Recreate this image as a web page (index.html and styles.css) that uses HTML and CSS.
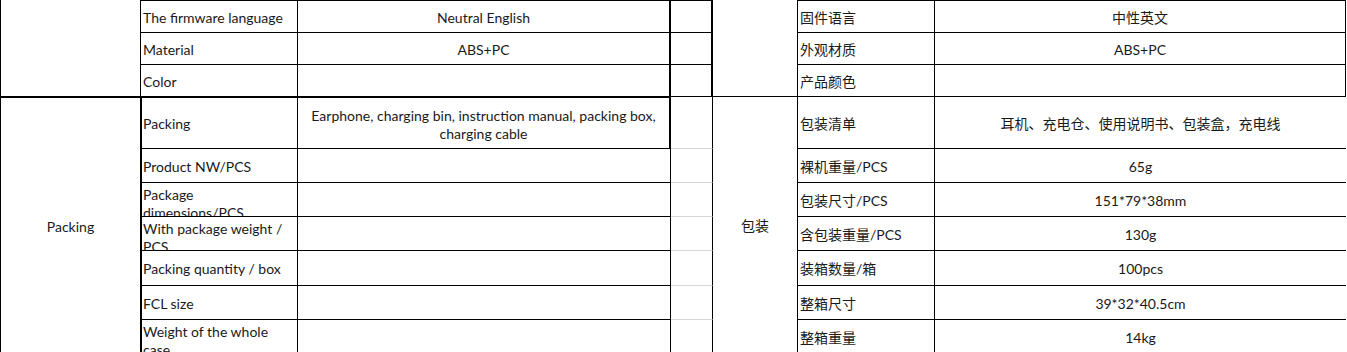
FILE: index.html
```html
<!DOCTYPE html>
<html lang="zh-CN">
<head>
<meta charset="utf-8">
<title>Spec sheet</title>
<link rel="stylesheet" href="styles.css">
</head>
<body>
<div class="sheet">
  <!-- row 1 -->
  <div class="c cat span3"></div>
  <div class="c lbl top">The firmware language</div>
  <div class="c val top thick-r">Neutral English</div>
  <div class="c gap top thick-r"></div>
  <div class="c cat-zh span3"></div>
  <div class="c lbl top">固件语言</div>
  <div class="c val top">中性英文</div>
  <!-- row 2 -->
  <div class="c lbl">Material</div>
  <div class="c val thick-r">ABS+PC</div>
  <div class="c gap thick-r"></div>
  <div class="c lbl">外观材质</div>
  <div class="c val">ABS+PC</div>
  <!-- row 3 -->
  <div class="c lbl">Color</div>
  <div class="c val thick-r"></div>
  <div class="c gap thick-r"></div>
  <div class="c lbl">产品颜色</div>
  <div class="c val"></div>
  <!-- row 4 -->
  <div class="c cat span7 sect">Packing</div>
  <div class="c lbl sect lower">Packing</div>
  <div class="c val sect thick-r multi">Earphone, charging bin, instruction manual, packing box, charging cable</div>
  <div class="c gap grid-b"></div>
  <div class="c cat-zh span7">包装</div>
  <div class="c lbl">包装清单</div>
  <div class="c val open">耳机、充电仓、使用说明书、包装盒，充电线</div>
  <!-- row 5 -->
  <div class="c lbl lower">Product NW/PCS</div>
  <div class="c val"></div>
  <div class="c gap grid-b"></div>
  <div class="c lbl">裸机重量/PCS</div>
  <div class="c val open">65g</div>
  <!-- row 6 -->
  <div class="c lbl lower wrap">Package dimensions/PCS</div>
  <div class="c val"></div>
  <div class="c gap grid-b"></div>
  <div class="c lbl">包装尺寸/PCS</div>
  <div class="c val open">151*79*38mm</div>
  <!-- row 7 -->
  <div class="c lbl lower wrap">With package weight / PCS</div>
  <div class="c val"></div>
  <div class="c gap grid-b"></div>
  <div class="c lbl">含包装重量/PCS</div>
  <div class="c val open">130g</div>
  <!-- row 8 -->
  <div class="c lbl lower">Packing quantity / box</div>
  <div class="c val"></div>
  <div class="c gap grid-b"></div>
  <div class="c lbl">装箱数量/箱</div>
  <div class="c val open">100pcs</div>
  <!-- row 9 -->
  <div class="c lbl lower">FCL size</div>
  <div class="c val"></div>
  <div class="c gap grid-b"></div>
  <div class="c lbl">整箱尺寸</div>
  <div class="c val open">39*32*40.5cm</div>
  <!-- row 10 -->
  <div class="c lbl lower wrap">Weight of the whole case</div>
  <div class="c val"></div>
  <div class="c gap grid-b"></div>
  <div class="c lbl">整箱重量</div>
  <div class="c val open">14kg</div>
</div>
</body>
</html>
```

FILE: styles.css
```css
* {
  box-sizing: border-box;
}

html,
body {
  margin: 0;
  padding: 0;
  background: #ffffff;
}

body {
  overflow: hidden;
  font-family: Lato, "Noto Sans CJK SC", sans-serif;
  font-size: 14px;
  color: #1a1a1a;
}

.sheet {
  display: grid;
  width: 1346px;
  grid-template-columns: 141px 157px 373px 42px 85px 137px 411px;
  grid-template-rows: 33px 32px 32px 52px 34px 34px 34px 35px 34px 34px;
}

.c {
  display: flex;
  align-items: center;
  overflow: hidden;
  line-height: 18px;
  padding-top: 2px;
  border-right: 1px solid #000;
  border-bottom: 1px solid #000;
  min-width: 0;
}

.top {
  border-top: 1px solid #000;
}

.span3 {
  grid-row: span 3;
}

.span7 {
  grid-row: span 7;
}

.cat {
  border-left: 1px solid #000;
  justify-content: center;
}

.cat-zh {
  justify-content: center;
}

.sect {
  border-top: 1px solid #000;
}

.lbl {
  justify-content: flex-start;
  padding-left: 2px;
  white-space: nowrap;
}

.lower {
  border-left: 1px solid #000;
  padding-left: 1px;
}

.wrap {
  white-space: normal;
  align-items: flex-start;
  padding-top: 3px;
  padding-right: 4px;
}

.val {
  justify-content: center;
  text-align: center;
  padding-left: 8px;
  padding-right: 8px;
}

.multi {
  padding-top: 3px;
}

.thick-r {
  border-right-width: 2px;
}

.gap {
  background: #ffffff;
}

.grid-b {
  border-bottom-color: #d6d6d6;
}

.open {
  border-right: none;
}
```
